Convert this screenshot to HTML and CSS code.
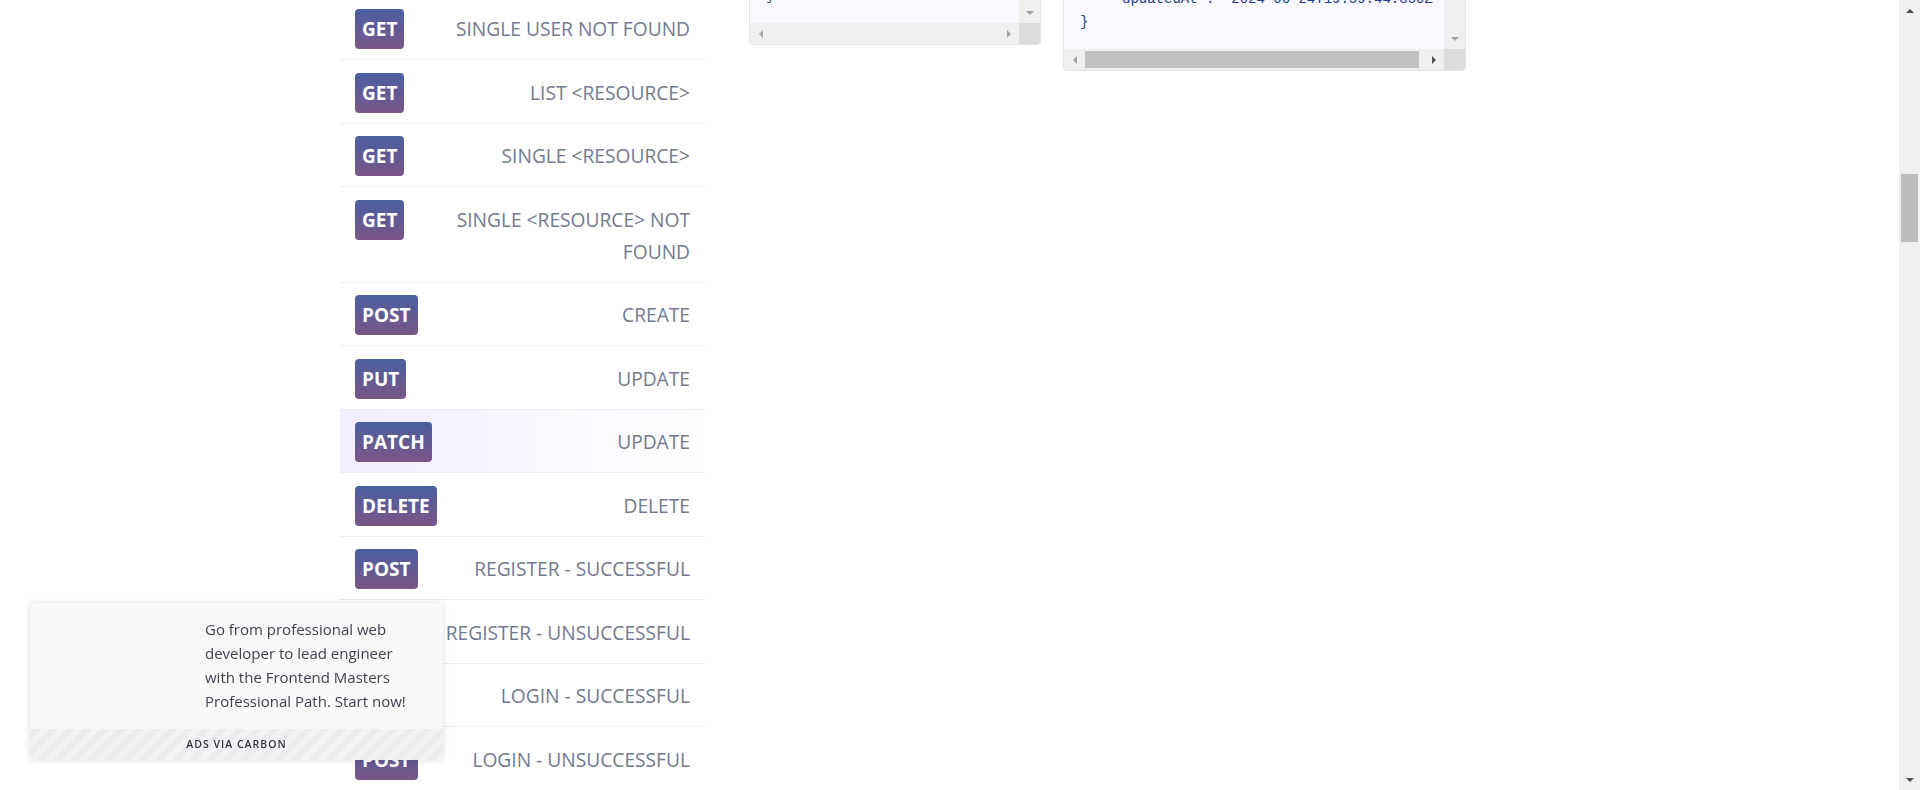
FILE: index.html
```html
<!DOCTYPE html>
<html lang="en">
<head>
<meta charset="utf-8">
<title>Reqres</title>
<link rel="stylesheet" href="styles.css">
</head>
<body>
<div class="page">
  <div class="content">
    <ul class="endpoints">
      <li class="endpoint"><span class="method">GET</span><span class="name">SINGLE USER NOT FOUND</span></li>
      <li class="endpoint"><span class="method">GET</span><span class="name">LIST &lt;RESOURCE&gt;</span></li>
      <li class="endpoint"><span class="method">GET</span><span class="name">SINGLE &lt;RESOURCE&gt;</span></li>
      <li class="endpoint"><span class="method">GET</span><span class="name">SINGLE &lt;RESOURCE&gt; NOT FOUND</span></li>
      <li class="endpoint"><span class="method">POST</span><span class="name">CREATE</span></li>
      <li class="endpoint"><span class="method">PUT</span><span class="name">UPDATE</span></li>
      <li class="endpoint active"><span class="method">PATCH</span><span class="name">UPDATE</span></li>
      <li class="endpoint"><span class="method">DELETE</span><span class="name">DELETE</span></li>
      <li class="endpoint"><span class="method">POST</span><span class="name">REGISTER - SUCCESSFUL</span></li>
      <li class="endpoint"><span class="method">POST</span><span class="name">REGISTER - UNSUCCESSFUL</span></li>
      <li class="endpoint"><span class="method">POST</span><span class="name">LOGIN - SUCCESSFUL</span></li>
      <li class="endpoint"><span class="method">POST</span><span class="name">LOGIN - UNSUCCESSFUL</span></li>
      <li class="endpoint"><span class="method">GET</span><span class="name">DELAYED RESPONSE</span></li>
    </ul>

    <div class="col col-req">
      <div class="code-box">
        <div class="code code-req">
          <div class="line">{</div>
          <div class="line">    "name": "morpheus",</div>
          <div class="line">    "job": "zion resident"</div>
          <div class="line">}</div>
        </div>
        <div class="vbar"><div class="sbtn"><span class="arr-down off"></span></div></div>
        <div class="hbar">
          <div class="sbtn"><span class="arr-left off"></span></div>
          <div class="track"></div>
          <div class="sbtn"><span class="arr-right off"></span></div>
        </div>
        <div class="corner"></div>
      </div>
    </div>

    <div class="col col-res">
      <div class="code-box">
        <div class="code code-res">
          <div class="line">{</div>
          <div class="line">    "name": "morpheus",</div>
          <div class="line">    "job": "zion resident",</div>
          <div class="line">    "updatedAt": "2024-06-24T19:59:44.850Z"</div>
          <div class="line">}</div>
        </div>
        <div class="vbar"><div class="sbtn"><span class="arr-down off"></span></div></div>
        <div class="hbar">
          <div class="sbtn"><span class="arr-left off"></span></div>
          <div class="track"><div class="hthumb"></div></div>
          <div class="sbtn"><span class="arr-right"></span></div>
        </div>
        <div class="corner"></div>
      </div>
    </div>
  </div>
</div>

<div class="page-scroll">
  <div class="sbtn"><span class="arr-up"></span></div>
  <div class="ptrack"><div class="pthumb"></div></div>
  <div class="sbtn"><span class="arr-down"></span></div>
</div>

<div class="carbon">
  <div class="carbon-main">
    <div class="carbon-img"></div>
    <div class="carbon-text">Go from professional web<br>developer to lead engineer<br>with the Frontend Masters<br>Professional Path. Start now!</div>
  </div>
  <div class="carbon-poweredby">ads via Carbon</div>
</div>
</body>
</html>
```

FILE: styles.css
```css
* { box-sizing: border-box; }

html, body {
  margin: 0;
  height: 100%;
  overflow: hidden;
  background: #fff;
}

body {
  display: flex;
  font-family: "Open Sans", "Noto Sans", sans-serif;
}

.page {
  flex: 1;
  overflow: hidden;
}

.content {
  display: flex;
  align-items: flex-start;
  margin-top: -4.5px;
  padding-left: 340px;
}

/* endpoint list */
.endpoints {
  width: 365px;
  flex: none;
  list-style: none;
  margin: 0;
  padding: 0;
}

.endpoint {
  display: flex;
  justify-content: space-between;
  align-items: flex-start;
  border-top: 1px solid #eeebf9;
  padding: 16.5px 15px 14px;
}

.endpoint.active {
  background: linear-gradient(90deg, #f3effe 0%, #f5f1fe 25%, #ffffff 100%);
}

.method {
  flex: none;
  height: 40px;
  margin: -4px 0;
  padding: 0 7px;
  border-radius: 4px;
  background: linear-gradient(180deg, #4a5f9f 0%, #7a5688 100%);
  color: #fff;
  font-weight: 700;
  font-size: 19px;
  line-height: 40px;
}

.name {
  margin-left: 24px;
  text-align: right;
  font-size: 19.2px;
  line-height: 32px;
  color: #737a8f;
}

/* code boxes */
.col { flex: none; }
.col-req { width: 292px; margin-left: 44px; }
.col-res { width: 403px; margin-left: 22px; }

.code-box {
  display: grid;
  grid-template-columns: 1fr 21px;
  grid-template-rows: auto 21px;
  border: 1px solid #e4e4e8;
  border-radius: 4px;
  background: #faf8ff;
  overflow: hidden;
}

.code {
  display: flex;
  flex-direction: column;
  justify-content: flex-end;
  overflow: hidden;
  padding: 0 16px 15px;
  font-family: "Liberation Mono", "DejaVu Sans Mono", monospace;
  font-size: 14px;
  line-height: 23px;
  color: #21408a;
}

.code-req { height: 26.5px; }
.code-res { height: 52.5px; }

.line { white-space: pre; }

.vbar {
  background: #f0f0f0;
  display: flex;
  flex-direction: column;
  justify-content: flex-end;
}

.hbar {
  display: flex;
  background: #f0f0f0;
}

.track {
  flex: 1;
  display: flex;
  align-items: center;
}

.hthumb {
  width: calc(100% - 4px);
  height: 17px;
  background: #c1c1c1;
}

.corner { background: #dcdcdc; }

.sbtn {
  flex: none;
  width: 21px;
  height: 21px;
  display: flex;
  align-items: center;
  justify-content: center;
}

.arr-down, .arr-up, .arr-left, .arr-right {
  width: 0;
  height: 0;
  border-style: solid;
  border-color: transparent;
}

.arr-down { border-width: 4px 4.5px 0; border-top-color: #505050; }
.arr-up { border-width: 0 4.5px 4px; border-bottom-color: #505050; }
.arr-left { border-width: 4.5px 4px 4.5px 0; border-right-color: #505050; }
.arr-right { border-width: 4.5px 0 4.5px 4px; border-left-color: #505050; }

.arr-down.off { border-top-color: #a3a3a3; }
.arr-left.off { border-right-color: #a3a3a3; }
.arr-right.off { border-left-color: #a3a3a3; }

/* page scrollbar */
.page-scroll {
  flex: none;
  width: 21px;
  height: 100%;
  background: #f0f0f0;
  display: flex;
  flex-direction: column;
}

.ptrack {
  flex: 1;
  padding: 153px 2px 0;
}

.pthumb {
  height: 68px;
  background: #bdbdbd;
}

/* carbon ad */
.carbon {
  position: fixed;
  left: 30px;
  bottom: 30px;
  width: 413px;
  height: 157px;
  display: flex;
  flex-direction: column;
  background: #f8f8f9;
  box-shadow: 0 0 7px rgba(0, 0, 0, 0.13);
}

.carbon-main {
  flex: 1;
  display: flex;
  padding-top: 14px;
}

.carbon-img {
  flex: none;
  width: 175px;
}

.carbon-text {
  font-size: 15px;
  line-height: 24px;
  color: #3f3f4e;
}

.carbon-poweredby {
  height: 31px;
  line-height: 31px;
  text-align: center;
  text-transform: uppercase;
  letter-spacing: 1px;
  font-size: 10.5px;
  font-weight: 600;
  color: #333340;
  background: repeating-linear-gradient(-45deg, #f3f3f5 0 6px, #ececef 6px 12px);
}
```
